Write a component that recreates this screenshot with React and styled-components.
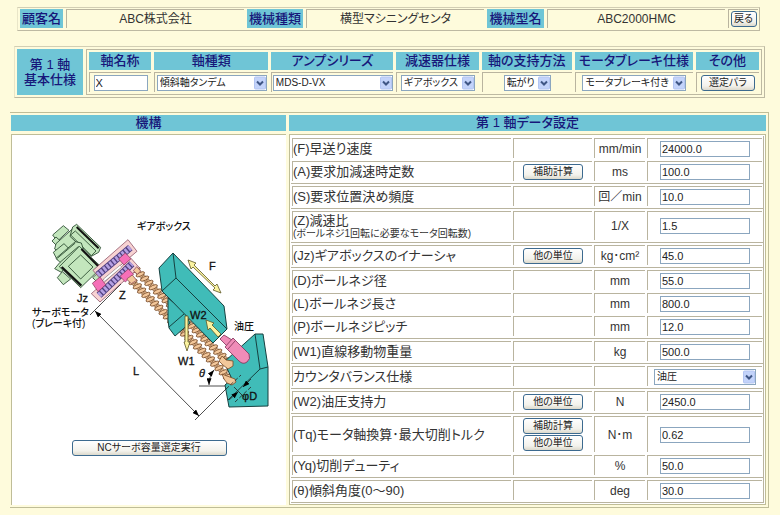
import React from "react";
import styled, { createGlobalStyle } from "styled-components";

const axisFields = [
  { id: "axisName", label: "軸名称", type: "text", value: "X", width: 54 },
  { id: "axisType", label: "軸種類", type: "select", value: "傾斜軸タンデム", width: 110 },
  { id: "ampSeries", label: "アンプシリーズ", type: "select", value: "MDS-D-VX", width: 120 },
  { id: "reducer", label: "減速器仕様", type: "select", value: "ギアボックス", width: 74 },
  { id: "support", label: "軸の支持方法", type: "select", value: "転がり", width: 47 },
  { id: "brake", label: "モータブレーキ仕様", type: "select", value: "モータブレーキ付き", width: 104 },
  { id: "other", label: "その他", type: "button", value: "選定パラ", width: 54 },
];

const CALC = "補助計算";
const UNIT = "他の単位";

const dataGroups = [
  [
    { id: "F", label: "(F)早送り速度", unit: "mm/min", value: "24000.0" },
    { id: "A", label: "(A)要求加減速時定数", buttons: [CALC], unit: "ms", value: "100.0" },
  ],
  [{ id: "S", label: "(S)要求位置決め頻度", unit: "回／min", value: "10.0" }],
  [
    {
      id: "Z",
      label: "(Z)減速比",
      note: "(ボールネジ1回転に必要なモータ回転数)",
      unit: "1/X",
      value: "1.5",
      height: 29,
    },
  ],
  [{ id: "Jz", label: "(Jz)ギアボックスのイナーシャ", buttons: [UNIT], unit: "kg･cm²", value: "45.0" }],
  [
    { id: "D", label: "(D)ボールネジ径", unit: "mm", value: "55.0" },
    { id: "L", label: "(L)ボールネジ長さ", unit: "mm", value: "800.0" },
    { id: "P", label: "(P)ボールネジピッチ", unit: "mm", value: "12.0" },
  ],
  [{ id: "W1", label: "(W1)直線移動物重量", unit: "kg", value: "500.0" }],
  [{ id: "balance", label: "カウンタバランス仕様", unit: "", value: "油圧", select: true }],
  [{ id: "W2", label: "(W2)油圧支持力", buttons: [UNIT], unit: "N", value: "2450.0" }],
  [
    {
      id: "Tq",
      label: "(Tq)モータ軸換算･最大切削トルク",
      buttons: [CALC, UNIT],
      unit: "N･m",
      value: "0.62",
      height: 36,
    },
    { id: "Yq", label: "(Yq)切削デューティ", unit: "%", value: "50.0" },
  ],
  [{ id: "theta", label: "(θ)傾斜角度(0～90)", unit: "deg", value: "30.0" }],
];

const Dropdown = ({ id, value, width }) => (
  <SelectBox $width={width}>
    <Select id={id} defaultValue={value}>
      <option>{value}</option>
    </Select>
    <Arrow viewBox="0 0 12 13" aria-hidden="true">
      <rect x="0.5" y="0.5" width="11" height="12" rx="1" fill="#c3d3fa" stroke="#b3c5f2" />
      <path d="M3 5l3 3 3-3" fill="none" stroke="#3f5685" strokeWidth="2" />
    </Arrow>
  </SelectBox>
);

const AxisControl = ({ field }) => {
  if (field.type === "select") {
    return <Dropdown id={field.id} value={field.value} width={field.width} />;
  }
  if (field.type === "button") {
    return (
      <Button id={field.id} type="button" $width={field.width}>
        {field.value}
      </Button>
    );
  }
  return <TextBox id={field.id} type="text" defaultValue={field.value} $width={field.width} />;
};

const Screw = ({ x, y, count }) => (
  <g fill="#f3c79a" stroke="#6b4020" strokeWidth="0.7">
    {Array.from({ length: count }, (_, i) => {
      const cx = x + i * 4.3;
      const cy = y + i * 4.3;
      return (
        <g key={i} transform={`translate(${cx} ${cy}) rotate(45)`}>
          <rect x="-3" y="-2.4" width="6" height="4.8" strokeWidth="0.5" />
          <ellipse rx="1.8" ry="4.6" transform="rotate(20)" />
        </g>
      );
    })}
  </g>
);

const Mechanism = () => (
  <Drawing viewBox="14 216 270 210" role="img" aria-label="機構図">
    <defs>
      <marker id="tip" viewBox="0 0 8 6" refX="8" refY="3" markerWidth="7" markerHeight="5" markerUnits="userSpaceOnUse" orient="auto-start-reverse">
        <path d="M0 0L8 3L0 6z" />
      </marker>
    </defs>

    {/* ball screws */}
    <Screw x={136} y={271} count={22} />
    <Screw x={133} y={283} count={23} />

    {/* support block */}
    <g fill="#40bcb8" stroke="#16403f" strokeWidth="1" strokeLinejoin="round">
      <path d="M224 363L255 335L263 335L268 368V407L229 408L225 386L232 380z" />
      <path d="M255 335L260 370L268 368M260 370L228 401" fill="none" />
    </g>
    <g fill="#f3c79a" stroke="#7a4a26" strokeWidth="0.8">
      <path d="M222 357L226 361L233 362L233 367L228 370L223 366L219 362z" />
      <path d="M222 375L227 377L235 380L236 383L232 386L227 384L224 380z" />
    </g>

    {/* slide table with its nut */}
    <g fill="#40bcb8" stroke="#16403f" strokeWidth="1" strokeLinejoin="round">
      <path d="M168 299V321L169 329L175 337L190 324L184 312z" />
      <path d="M169 328L184 315" fill="none" />
      <path d="M173 254L159 269L162 292L213 344L227 330L224 307z" />
      <path d="M173 254L176 279L162 292M176 279L227 330" fill="none" />
    </g>

    {/* hydraulic cylinder */}
    <g fill="#f08cb8" stroke="#7c3055" strokeWidth="0.8">
      <path d="M224 336L232 341L228 348L220 340z" />
      <path d="M233 339L249 355Q251 360 247 363Q243 366 239 362L225 348z" />
      <path d="M235 342L228 350" fill="none" />
    </g>

    {/* motors */}
    <g transform="translate(20 200) scale(.3333)" fill="#c3e6bd" stroke="#24442a" strokeWidth="2.5" strokeLinejoin="round">
      <path d="M98 108L130 80L147 94L112 127z" />
      <path d="M96 126L108 114L128 132L114 144z" />
      <path d="M108 134L157 90L190 120L140 172L104 150z" />
      <path d="M158 84L170 76L242 145L236 160L214 172L150 112z" />
      <path d="M152 108L166 96L228 156L214 170z" />
      <path d="M170 84L236 148" stroke="#111" strokeWidth="6" />
      <path d="M100 160L132 134L148 150L112 183z" />
      <path d="M112 236L127 218L152 240L130 257z" />
      <path d="M104 209L120 190L108 178L166 128L184 132L190 150L138 200L124 220z" />
      <path d="M112 178L166 132M120 190L176 142" fill="none" />
      <path d="M118 203L178 142L245 205L182 266z" />
      <path d="M145 202L182 168L219 204L182 240z" />
      <path d="M125 204L184 260" stroke="#111" strokeWidth="7" />
      <path d="M184 150L237 204" stroke="#111" strokeWidth="6" />
      <path d="M218 236L238 218L250 232L232 250z" />
    </g>

    {/* gearbox */}
    <g transform="translate(20 200) scale(.3333)" stroke="#7b3a50" strokeWidth="2">
      <path d="M324 122L351 157L246 246L219 214z" fill="#f8d3d3" />
      <path d="M333 178L358 206L240 309L214 284z" fill="#f8d3d3" />
      <path d="M233 228L331 146M237 289L336 194" stroke="#514080" strokeWidth="21" />
      <path d="M233 228L331 146M237 289L336 194" stroke="#b5a0e2" strokeWidth="16" strokeDasharray="8 4" />
      <path d="M296 180L316 162L333 179L312 198z" fill="#f66fb8" />
      <path d="M300 232L325 210L341 226L316 249z" fill="#f66fb8" />
      <path d="M217 253L240 234L257 257L234 278z" fill="#f66fb8" />
      <path d="M253 243L302 202" stroke="#8a8a8a" strokeWidth="9" />
      <path d="M253 243L302 202" stroke="#fff" strokeWidth="6" />
      <path d="M320 240L337 228L350 244L334 254z" fill="#f3c79a" />
      <path d="M340 215L350 203L362 216L352 226z" fill="#f3c79a" />
    </g>

    {/* direction arrows */}
    <g fill="#fbf3a0" stroke="#5d5726" strokeWidth="0.8" strokeLinejoin="round">
      <path d="M188 261L196 264L194 266L215 287L217 285L221 294L213 291L215 289L193 268L191 270z" />
      <path d="M185 317H188V343H190L187 352L184 343H185z" />
      <path d="M206 321L214 324L212 326L221 335L218 338L210 329L208 331z" />
    </g>

    {/* dimension lines */}
    <g fill="none" stroke="#222" strokeWidth="0.8">
      <path d="M90 316L121 285M195 421L226 390" />
      <path d="M95 312L199 417" markerStart="url(#tip)" markerEnd="url(#tip)" />
      <path d="M199 387H225" />
      <path d="M214 371Q209 377 209 386" markerStart="url(#tip)" markerEnd="url(#tip)" />
      <path d="M226 390L241 376M235 403L251 388" strokeDasharray="4 2" />
      <path d="M251 380L243 388" markerEnd="url(#tip)" />
      <path d="M229 401L238 393" markerEnd="url(#tip)" />
      <path d="M234 388L244 398" />
    </g>

    <DrawingText x="137" y="231">ギアボックス</DrawingText>
    <DrawingText x="32" y="317">サーボモータ</DrawingText>
    <DrawingText x="32" y="328">(ブレーキ付)</DrawingText>
    <DrawingText x="234" y="331">油圧</DrawingText>
    <Symbol x="77" y="303">Jz</Symbol>
    <Symbol x="119" y="300">Z</Symbol>
    <Symbol x="209" y="271">F</Symbol>
    <Symbol x="190" y="320">W2</Symbol>
    <Symbol x="178" y="366">W1</Symbol>
    <Symbol x="133" y="376">L</Symbol>
    <Symbol x="199" y="378" fontStyle="italic">θ</Symbol>
    <Symbol x="242" y="401">φD</Symbol>
  </Drawing>
);

const DataRow = ({ row }) => (
  <Row $height={row.height}>
    <NameCell scope="row">
      <label htmlFor={row.id}>{row.label}</label>
      {row.note && <Note>{row.note}</Note>}
    </NameCell>
    <DataCell>
      {(row.buttons || []).map((text) => (
        <Button key={text} type="button" $width={60}>
          {text}
        </Button>
      ))}
    </DataCell>
    <DataCell>{row.unit}</DataCell>
    <DataCell>
      {row.select ? (
        <Dropdown id={row.id} value={row.value} width={102} />
      ) : (
        <TextBox id={row.id} type="text" defaultValue={row.value} $width={90} />
      )}
    </DataCell>
  </Row>
);

const App = () => (
  <>
    <GlobalStyle />
    <Page>
      <MachineBar>
        <BarTitle>顧客名</BarTitle>
        <BarValue>ABC株式会社</BarValue>
        <BarTitle>機械種類</BarTitle>
        <BarValue>横型マシニングセンタ</BarValue>
        <BarTitle>機械型名</BarTitle>
        <BarValue>ABC2000HMC</BarValue>
        <BarValue>
          <Button type="button" $width={26}>
            戻る
          </Button>
        </BarValue>
      </MachineBar>

      <AxisPanel>
        <AxisTitle>
          第 1 軸
          <br />
          基本仕様
        </AxisTitle>
        <AxisGrid>
          {axisFields.map((field) => (
            <AxisField key={field.id}>
              <AxisLabel htmlFor={field.id}>{field.label}</AxisLabel>
              <AxisCell>
                <AxisControl field={field} />
              </AxisCell>
            </AxisField>
          ))}
        </AxisGrid>
      </AxisPanel>

      <Main>
        <Column>
          <Heading>機構</Heading>
          <MechanismPanel>
            <Mechanism />
            <Button type="button" $width={155}>
              NCサーボ容量選定実行
            </Button>
          </MechanismPanel>
        </Column>
        <Column>
          <Heading>第 1 軸データ設定</Heading>
          <DataTable>
            {dataGroups.map((group) => (
              <Group key={group[0].id}>
                {group.map((row) => (
                  <DataRow key={row.id} row={row} />
                ))}
              </Group>
            ))}
          </DataTable>
        </Column>
      </Main>
    </Page>
  </>
);

const GlobalStyle = createGlobalStyle`
  * {
    box-sizing: border-box;
  }
  body {
    margin: 0;
    background-color: #fefbdc;
    color: #333;
    font-family: "Liberation Sans", "Noto Sans CJK JP", sans-serif;
    font-feature-settings: "palt";
    font-size: 13px;
    line-height: 16px;
  }
  button, input, select {
    font-family: inherit;
    font-feature-settings: inherit;
    color: #222;
  }
`;

const Page = styled.div`
  display: flex;
  flex-direction: column;
  padding: 7px 11px 6px 10px;
`;

const MachineBar = styled.header`
  display: grid;
  grid-template-columns: 43px 1fr 56px 1fr 57px 1fr 30px;
  gap: 3px;
  margin: 0 9px 0 7px;
  padding: 1px 1px 2px 2px;
  border: 1px solid #bdb9a2;
  border-left-color: #e9e5c8;
  border-top-color: #d2ceb4;
`;

const BarTitle = styled.div`
  height: 19px;
  background-color: #6fc5d6;
  color: #17177a;
  font-weight: 500;
  line-height: 19px;
  text-align: center;
  white-space: nowrap;
`;

const BarValue = styled.div`
  display: flex;
  align-items: center;
  justify-content: center;
  border-top: 1px solid #b9b49f;
  border-left: 1px solid #b9b49f;
  font-size: 12px;
  white-space: nowrap;
`;

const AxisPanel = styled.section`
  display: grid;
  grid-template-columns: 66px 1fr;
  gap: 3px;
  margin: 15px 4px 14px;
  padding: 2px;
  border: 1px solid #bdb9a2;
  border-left-color: #e9e5c8;
  border-top-color: #d2ceb4;
`;

const AxisTitle = styled.h1`
  display: flex;
  flex-direction: column;
  justify-content: center;
  margin: 0;
  background-color: #6fc5d6;
  color: #17177a;
  font-size: 13px;
  font-weight: 500;
  line-height: 15px;
  text-align: center;
`;

const AxisGrid = styled.div`
  display: grid;
  grid-template-columns: 62fr 114fr 122fr 82fr 90fr 118fr 63fr;
  gap: 3px;
  padding: 2px;
  border: 1px solid #bdb9a2;
`;

const AxisField = styled.div`
  display: flex;
  flex-direction: column;
  gap: 2px;
  min-width: 0;
`;

const AxisLabel = styled.label`
  height: 18px;
  background-color: #6fc5d6;
  color: #17177a;
  font-weight: 500;
  line-height: 18px;
  text-align: center;
  white-space: nowrap;
`;

const AxisCell = styled.div`
  display: flex;
  align-items: center;
  justify-content: center;
  height: 20px;
  border-top: 1px solid #b9b49f;
  border-left: 1px solid #b9b49f;
`;

const Main = styled.main`
  display: grid;
  grid-template-columns: 275fr 477fr;
  gap: 3px;
  padding: 2px 2px 2px 1px;
  border: 1px solid #bfbd98;
  border-left: none;
`;

const Column = styled.section`
  display: flex;
  flex-direction: column;
  gap: 3px;
  min-width: 0;
`;

const Heading = styled.h2`
  margin: 0;
  background-color: #6fc5d6;
  color: #17177a;
  font-size: 13px;
  font-weight: 500;
  line-height: 16px;
  text-align: center;
`;

const MechanismPanel = styled.div`
  display: flex;
  flex: 1;
  flex-direction: column;
  align-items: center;
  gap: 15px;
  padding-top: 80px;
  border-top: 1px solid #bfbd98;
  border-left: 1px solid #bfbd98;
  background-color: #fff;
`;

const Drawing = styled.svg`
  width: 100%;
  max-width: 270px;
  height: 210px;
`;

const DrawingText = styled.text`
  fill: #111;
  font-size: 10px;
  font-weight: 500;
`;

const Symbol = styled(DrawingText)`
  font-size: 11px;
  stroke: #111;
  stroke-width: 0.3px;
`;

const DataTable = styled.table`
  display: block;
  padding: 1px;
  border: 1px solid #bfbd98;
  background-color: #fff;
`;

const Group = styled.tbody`
  display: flex;
  flex-direction: column;
  gap: 3px;
  padding: 2px 1px;
  border-right: 1px solid #b9b49f;
  border-bottom: 1px solid #b9b49f;
`;

const Row = styled.tr`
  display: grid;
  grid-template-columns: 219fr 79fr 51fr 115fr;
  gap: 2px;
  height: ${({ $height = 20 }) => $height}px;
`;

const DataCell = styled.td`
  display: flex;
  flex-direction: column;
  align-items: center;
  justify-content: center;
  gap: 1px;
  min-width: 0;
  padding: 0;
  border-top: 1px solid #b9b49f;
  border-left: 1px solid #b9b49f;
  font-size: 12px;
  white-space: nowrap;
`;

const NameCell = styled.th`
  display: flex;
  flex-direction: column;
  justify-content: center;
  min-width: 0;
  padding: 0;
  border-top: 1px solid #b9b49f;
  border-left: 1px solid #b9b49f;
  font-weight: 400;
  line-height: 15px;
  text-align: left;
  white-space: nowrap;
`;

const Note = styled.span`
  font-size: 10px;
  line-height: 12px;
`;

const Button = styled.button`
  width: ${({ $width }) => $width}px;
  height: 16px;
  padding: 0;
  border: 1px solid #3c6a8f;
  border-radius: 3px;
  background: linear-gradient(#fff, #f3f2ec 70%, #dcd9cc);
  font-size: 10px;
  line-height: 14px;
  white-space: nowrap;
  cursor: pointer;
`;

const TextBox = styled.input`
  width: ${({ $width }) => $width}px;
  height: 16px;
  padding: 0 1px;
  border: 1px solid #8ba6bf;
  border-radius: 0;
  background-color: #fff;
  font-size: 11px;
`;

const SelectBox = styled.span`
  display: grid;
  align-items: center;
  width: ${({ $width }) => $width}px;
  max-width: 100%;
  height: 16px;
`;

const Select = styled.select`
  grid-area: 1 / 1;
  width: 100%;
  height: 16px;
  padding: 0 0 0 2px;
  appearance: none;
  border: 1px solid #8ba6bf;
  border-radius: 0;
  background-color: #fff;
  font-size: 10px;
  line-height: 14px;
`;

const Arrow = styled.svg`
  grid-area: 1 / 1;
  justify-self: end;
  width: 12px;
  height: 14px;
  margin-right: 1px;
  pointer-events: none;
`;

export default App;
